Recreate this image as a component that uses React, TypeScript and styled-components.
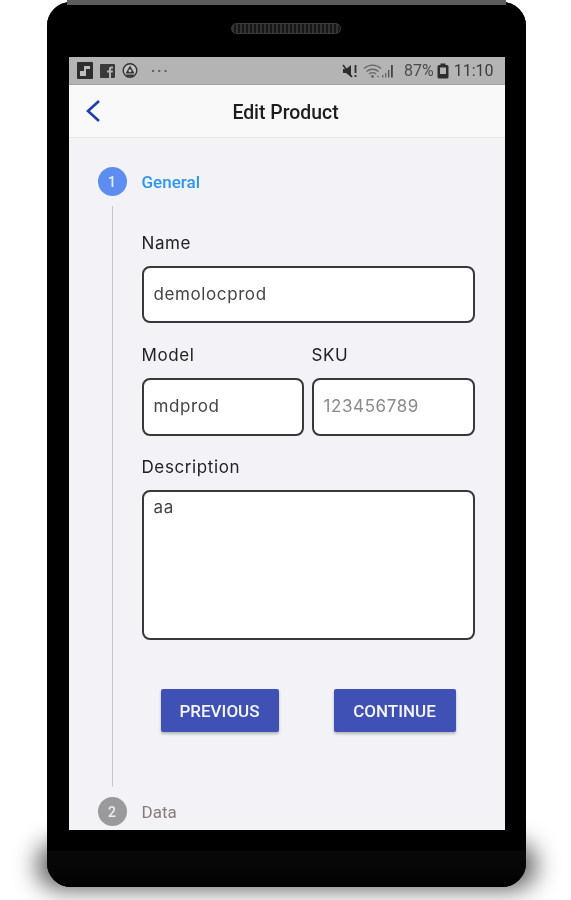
import styled, { createGlobalStyle } from "styled-components"

const GlobalStyle = createGlobalStyle`
    html, body {
        margin: 0;
        padding: 0;
        background: #ffffff;
    }
    * {
        box-sizing: border-box;
    }
`

function App() {
    return (
        <>
            <GlobalStyle />
            <Page>
                <Phone>
                    <TopEdge />
                    <Speaker />
                    <Screen>
                        <StatusBar>
                            <StatusGroup>
                                <svg width="16" height="17" viewBox="0 0 16 17">
                                    <rect x="0" y="0" width="16" height="17" rx="1" fill="#2e2e2e" />
                                    <path d="M3 14V9h4V4h6v3H9v7z" fill="#bdbdbd" />
                                </svg>
                                <svg width="15" height="16" viewBox="0 0 15 16">
                                    <rect x="0" y="1" width="15" height="14" rx="1" fill="#3a3a3a" />
                                    <path d="M9 15V9.500H7V7.500h2V6c0-1.600 1-2.400 2.400-2.400H13v2h-1c-.7 0-1 .3-1 1v1h2l-.3 2H11V15z" fill="#b4b4b4" />
                                </svg>
                                <svg width="16" height="17" viewBox="0 0 16 17">
                                    <circle cx="8" cy="8.500" r="6.800" fill="#c4c4c4" stroke="#333" strokeWidth="1.400" />
                                    <path d="M8 3.500L12.500 11.500h-9z" fill="#333" />
                                    <circle cx="8" cy="8.800" r="1.500" fill="#c4c4c4" />
                                    <path d="M4 12.500h8l-1.500 2h-5z" fill="#333" />
                                </svg>
                                <Dots>···</Dots>
                            </StatusGroup>
                            <StatusGroup $gap={3}>
                                <svg width="17" height="16" viewBox="0 0 17 16">
                                    <path d="M1 6h3l5-4v12l-5-4H1z" fill="#2e2e2e" />
                                    <path d="M1 2l9 12" stroke="#2e2e2e" strokeWidth="1.600" />
                                    <path d="M13.500 2v8M13.500 12v2" stroke="#2e2e2e" strokeWidth="1.800" />
                                </svg>
                                <svg width="33" height="16" viewBox="0 0 33 16">
                                    <path d="M2 5.500C7 1 14 1 19 5.500M4.500 8.500C8 5.500 13 5.500 16.500 8.500M7 11c2-1.500 5-1.500 7 0" fill="none" stroke="#666" strokeWidth="1.300" />
                                    <circle cx="10.500" cy="13.500" r="1.400" fill="#666" />
                                    <circle cx="16" cy="13.500" r="0.800" fill="#666" />
                                    <rect x="20" y="12" width="1.400" height="2.500" fill="#666" />
                                    <rect x="23" y="10" width="1.400" height="4.500" fill="#666" />
                                    <rect x="26" y="7" width="1.400" height="7.500" fill="#555" />
                                    <rect x="29" y="2" width="1.800" height="12.500" fill="#444" />
                                </svg>
                                <StatusText>87%</StatusText>
                                <svg width="12" height="16" viewBox="0 0 12 16">
                                    <rect x="0.500" y="2" width="11" height="13.500" rx="1.500" fill="#2e2e2e" />
                                    <rect x="3.500" y="0.500" width="5" height="2" fill="#2e2e2e" />
                                    <rect x="3" y="4.500" width="6" height="6.500" fill="#b4b4b4" />
                                </svg>
                                <Clock>11:10</Clock>
                            </StatusGroup>
                        </StatusBar>
                        <Header>
                            <BackIcon width="16" height="24" viewBox="0 0 16 24">
                                <path d="M14 2L3 12l11 10" fill="none" stroke="#1c3fa8" strokeWidth="2.600" />
                            </BackIcon>
                            <Title>Edit Product</Title>
                        </Header>
                        <Content>
                            <StepHead>
                                <StepCircle $active>1</StepCircle>
                                <StepLabel $active>General</StepLabel>
                            </StepHead>
                            <StepBody>
                                <Label>Name</Label>
                                <Input readOnly value="demolocprod" />
                                <Columns>
                                    <Column>
                                        <Label>Model</Label>
                                        <ColumnInput readOnly value="mdprod" />
                                    </Column>
                                    <Column>
                                        <Label>SKU</Label>
                                        <ColumnInput readOnly placeholder="123456789" />
                                    </Column>
                                </Columns>
                                <Label>Description</Label>
                                <TextArea readOnly value="aa" />
                                <Buttons>
                                    <ActionButton $width={118}>PREVIOUS</ActionButton>
                                    <ActionButton $width={122}>CONTINUE</ActionButton>
                                </Buttons>
                            </StepBody>
                            <StepHead>
                                <StepCircle>2</StepCircle>
                                <StepLabel>Data</StepLabel>
                            </StepHead>
                        </Content>
                    </Screen>
                </Phone>
            </Page>
        </>
    )
}

export default App

const Page = styled.div`
    width: 571px;
    height: 900px;
    padding: 2px 45px 0 47px;
    position: relative;
    overflow: hidden;
    background: #ffffff;
    filter: blur(0.6px);
`

const Phone = styled.div`
    position: relative;
    z-index: 0;
    width: 479px;
    height: 885px;
    padding-top: 55px;
    display: flex;
    justify-content: center;
    background: linear-gradient(#000 0, #000 848px, #080808 849px, #060606 870px, #000 885px);
    border-radius: 24px;
    box-shadow: inset 0 0 0 1px #3a3a3a;

    &::before {
        content: "";
        position: absolute;
        z-index: -1;
        left: -10px;
        right: -10px;
        top: 840px;
        bottom: -2px;
        border-radius: 24px;
        background: rgba(0, 0, 0, 0.65);
        filter: blur(12px);
    }

    &::after {
        content: "";
        position: absolute;
        inset: 0;
        z-index: -1;
        border-radius: 24px;
        background: inherit;
    }
`

const TopEdge = styled.div`
    position: absolute;
    top: -2px;
    left: 20px;
    right: 20px;
    height: 5px;
    background: #5c5c5c;
`

const Speaker = styled.div`
    position: absolute;
    top: 21px;
    left: 184px;
    width: 110px;
    height: 11px;
    border-radius: 6px;
    border: 1px solid #3d3d3d;
    background: repeating-linear-gradient(90deg, #333 0 2px, #161616 2px 4px);
`

const Screen = styled.div`
    width: 436px;
    height: 773px;
    display: flex;
    flex-direction: column;
    overflow: hidden;
    background: #f2f2f7;
`

const StatusBar = styled.div`
    height: 28px;
    flex-shrink: 0;
    padding: 0 11px 0 8px;
    display: flex;
    align-items: center;
    justify-content: space-between;
    background: #b4b4b4;
    border-bottom: 1px solid #a2a2a2;
`

const StatusGroup = styled.div<{ $gap?: number }>`
    display: flex;
    align-items: center;
    gap: ${(p) => p.$gap ?? 7}px;
`

const Dots = styled.span`
    margin-left: 6px;
    font-family: "Roboto", sans-serif;
    font-size: 20px;
    line-height: 16px;
    letter-spacing: 1px;
    color: #5a5a5a;
`

const StatusText = styled.span`
    margin-left: 6px;
    font-family: "Roboto", sans-serif;
    font-size: 16px;
    color: #4a4a4a;
`

const Clock = styled(StatusText)`
    margin-left: 2px;
    color: #3c3c3c;
`

const Header = styled.div`
    height: 53px;
    flex-shrink: 0;
    position: relative;
    display: flex;
    align-items: center;
    justify-content: center;
    background: #f9f9f9;
    border-bottom: 1px solid #e8e8ea;
`

const BackIcon = styled.svg`
    position: absolute;
    left: 16px;
    top: 14px;
`

const Title = styled.h1`
    margin: 2px 0 0 -2px;
    font-family: "Roboto", sans-serif;
    font-size: 19.400px;
    font-weight: 500;
    color: #1d1d1d;
`

const Content = styled.div`
    flex: 1;
    padding: 29px 0 0 29px;
`

const StepHead = styled.div`
    height: 29px;
    display: flex;
    align-items: center;
    gap: 15px;
`

const StepCircle = styled.div<{ $active?: boolean }>`
    width: 29px;
    height: 29px;
    border-radius: 50%;
    display: flex;
    align-items: center;
    justify-content: center;
    font-family: "Roboto", sans-serif;
    font-size: 14px;
    font-weight: 500;
    color: #e8eefc;
    background: ${(p) => (p.$active ? "#5d8df0" : "#9a9a9a")};
`

const StepLabel = styled.span<{ $active?: boolean }>`
    font-family: "Roboto", sans-serif;
    font-size: 17px;
    font-weight: ${(p) => (p.$active ? 500 : 400)};
    color: ${(p) => (p.$active ? "#2c97ee" : "#8a7a7a")};
`

const StepBody = styled.div`
    height: 581px;
    margin: 10px 0 10px 14px;
    padding: 27px 0 0 29px;
    border-left: 1px solid #c8c8cc;
`

const Label = styled.div`
    height: 20px;
    margin-bottom: 13px;
    font-family: "Inter", sans-serif;
    font-size: 17px;
    line-height: 20px;
    letter-spacing: 0.6px;
    color: #222;
`

const Input = styled.input`
    display: block;
    width: 333px;
    height: 57px;
    padding: 0 10px 2px;
    border: 2px solid #383838;
    border-radius: 8px;
    background: #fff;
    outline: none;
    font-family: "Inter", sans-serif;
    font-size: 17px;
    letter-spacing: 0.6px;
    color: #444;

    &::placeholder {
        color: #8a8a8a;
        opacity: 1;
    }
`

const ColumnInput = styled(Input)`
    width: 100%;
    height: 58px;
`

const Columns = styled.div`
    width: 333px;
    margin: 22px 0 21px;
    display: grid;
    grid-template-columns: 162px 163px;
    gap: 8px;
`

const Column = styled.div`
    min-width: 0;
`

const TextArea = styled.textarea`
    display: block;
    width: 333px;
    height: 150px;
    padding: 5px 10px;
    border: 2px solid #383838;
    border-radius: 8px;
    background: #fff;
    outline: none;
    resize: none;
    font-family: "Inter", sans-serif;
    font-size: 17px;
    letter-spacing: 0.6px;
    color: #444;
`

const Buttons = styled.div`
    margin: 49px 0 0 19px;
    display: flex;
    gap: 55px;
`

const ActionButton = styled.button<{ $width: number }>`
    width: ${(p) => p.$width}px;
    height: 43px;
    padding: 0;
    border: none;
    border-radius: 2px;
    background: #3f51b5;
    box-shadow: 0 2px 3px rgba(0, 0, 0, 0.25);
    font-family: "Roboto", sans-serif;
    font-size: 17px;
    font-weight: 500;
    color: #f4f5fb;
`
